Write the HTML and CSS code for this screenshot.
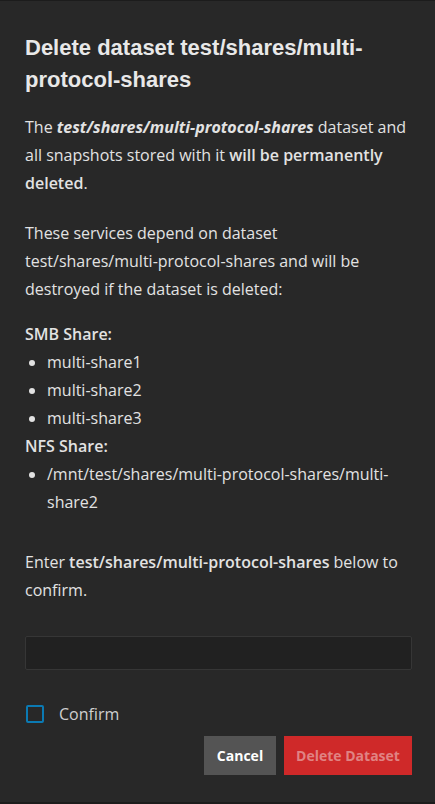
FILE: index.html
```html
<!DOCTYPE html>
<html>
<head>
<meta charset="utf-8">
<link rel="stylesheet" href="styles.css">
</head>
<body>
<div class="dialog">
  <h1 class="title">Delete dataset test/shares/multi-protocol-shares</h1>
  <p class="para first">The <b class="em"><i>test/shares/multi-protocol-shares</i></b> dataset and all snapshots stored with it <b>will be permanently deleted</b>.</p>
  <p class="para second">These services depend on dataset test/shares/multi-protocol-shares and will be destroyed if the dataset is deleted:</p>
  <div class="services">
    <div class="svc-title">SMB Share:</div>
    <ul class="svc-list">
      <li>multi-share1</li>
      <li>multi-share2</li>
      <li>multi-share3</li>
    </ul>
    <div class="svc-title">NFS Share:</div>
    <ul class="svc-list">
      <li>/mnt/test/shares/multi-protocol-shares/multi-share2</li>
    </ul>
  </div>
  <p class="para confirm-text">Enter <b>test/shares/multi-protocol-shares</b> below to confirm.</p>
  <div class="input"></div>
  <label class="check-row"><span class="checkbox"></span><span class="check-label">Confirm</span></label>
  <div class="actions">
    <button class="btn cancel">Cancel</button>
    <button class="btn delete">Delete Dataset</button>
  </div>
</div>
</body>
</html>
```
FILE: styles.css
```css
html, body {
  margin: 0;
  padding: 0;
  background: #1c1c1c;
  height: 804px;
  overflow: hidden;
}
.dialog {
  margin-top: 1px;
  height: 801px;
  box-sizing: border-box;
  background: #282828;
  padding: 31px 23px 0 25px;
  color: #e2e2e2;
  font-family: "Open Sans", "Liberation Sans", sans-serif;
  font-size: 16px;
  line-height: 28px;
}
.title {
  margin: 0 0 17px;
  font-family: "Liberation Sans", Arial, sans-serif;
  font-weight: bold;
  font-size: 22px;
  line-height: 32px;
  color: #e8e8e8;
}
.para {
  margin: 0;
}
.para.first {
  margin-bottom: 22px;
}
.para.second {
  margin-bottom: 17px;
}
.para b { font-weight: 600; }
.para b.em { font-weight: 700; }
.svc-title {
  font-weight: 600;
}
.svc-list {
  margin: 0;
  padding-left: 22px;
}
.confirm-text {
  margin-top: 32px;
  margin-bottom: 32px;
}
.input {
  height: 32px;
  background: #212121;
  border: 1px solid #363636;
  border-radius: 2px;
}
.check-row {
  display: flex;
  align-items: center;
  gap: 15px;
  margin-top: 30px;
  padding-left: 1px;
}
.checkbox {
  width: 14px;
  height: 14px;
  border: 2px solid #0b7ab3;
  border-radius: 2px;
}
.check-label {
  color: #cfcfcf;
}
.actions {
  display: flex;
  justify-content: flex-end;
  gap: 8px;
  margin-top: 8px;
}
.btn {
  height: 39px;
  border: none;
  border-radius: 0;
  font-family: "Open Sans", "Liberation Sans", sans-serif;
  font-weight: 700;
  font-size: 14px;
  padding: 0;
}
.cancel {
  background: #545454;
  color: #ffffff;
  width: 72px;
}
.delete {
  background: #cf2929;
  color: #e08383;
  width: 128px;
}
```
